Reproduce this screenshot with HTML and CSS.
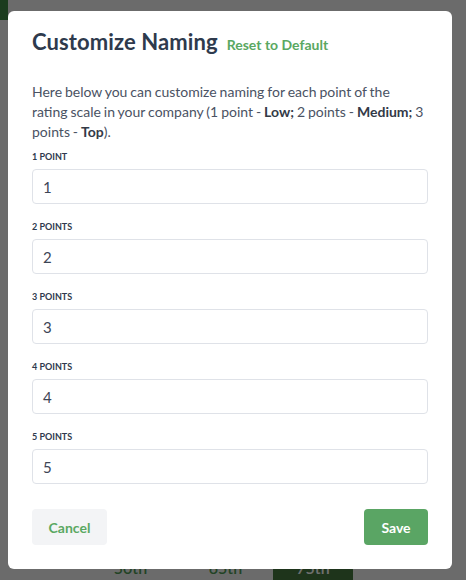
FILE: index.html
```html
<!DOCTYPE html>
<html lang="en">
<head>
<meta charset="utf-8">
<title>Customize Naming</title>
<link rel="stylesheet" href="styles.css">
</head>
<body>
<div class="page">
  <div class="page-top">
    <div class="page-brand"></div>
  </div>
  <div class="page-tabs">
    <span class="tab">50th</span>
    <span class="tab">65th</span>
    <span class="tab tab-active">75th</span>
  </div>
</div>
<div class="overlay"></div>
<div class="modal">
  <div class="modal-header">
    <h2 class="modal-title">Customize Naming</h2>
    <a class="reset-link">Reset to Default</a>
  </div>
  <p class="intro">Here below you can customize naming for each point of the rating scale in your company (1 point - <b>Low;</b> 2 points - <b>Medium;</b> 3 points - <b>Top</b>).</p>
  <div class="fields">
    <div class="field">
      <label class="field-label">1 Point</label>
      <div class="field-input">1</div>
    </div>
    <div class="field">
      <label class="field-label">2 Points</label>
      <div class="field-input">2</div>
    </div>
    <div class="field">
      <label class="field-label">3 Points</label>
      <div class="field-input">3</div>
    </div>
    <div class="field">
      <label class="field-label">4 Points</label>
      <div class="field-input">4</div>
    </div>
    <div class="field">
      <label class="field-label">5 Points</label>
      <div class="field-input">5</div>
    </div>
  </div>
  <div class="modal-actions">
    <button class="btn btn-cancel">Cancel</button>
    <button class="btn btn-save">Save</button>
  </div>
</div>
</body>
</html>
```
FILE: styles.css
```css
* { box-sizing: border-box; }
html, body { margin: 0; padding: 0; }
body {
  width: 466px;
  height: 580px;
  overflow: hidden;
  font-family: "Lato", "Open Sans", sans-serif;
  background: #f4f4f4;
  position: relative;
}
.page {
  height: 580px;
  display: flex;
  flex-direction: column;
}
.page-top { height: 20px; display: flex; }
.page-brand { width: 8px; height: 20px; background: #3e8a44; }
.page-tabs {
  margin-top: auto;
  display: flex;
  padding-left: 83px;
  height: 24px;
}
.tab {
  width: 95px;
  text-align: center;
  font-size: 16px;
  font-weight: 600;
  color: #4f9a55;
  padding-top: 2px;
}
.tab-active {
  width: 80px;
  background: #45763f;
  color: #fff;
  border-radius: 14px 14px 0 0;
}
.overlay {
  position: absolute;
  inset: 0;
  background: rgba(0,0,0,0.56);
}
.modal {
  position: absolute;
  left: 8px;
  top: 11px;
  width: 444px;
  height: 558px;
  background: #fff;
  border-radius: 6px;
  padding: 16px 24px 25px;
  display: flex;
  flex-direction: column;
}
.modal-header {
  display: flex;
  align-items: baseline;
  gap: 9px;
  height: 30px;
}
.modal-title {
  margin: 0;
  font-size: 22px;
  font-weight: 700;
  letter-spacing: 0.1px;
  color: #2e3a4d;
  line-height: 30px;
}
.reset-link {
  font-size: 14px;
  font-weight: 700;
  color: #5aa862;
}
.intro {
  margin: 25px 0 0;
  font-size: 14px;
  line-height: 20px;
  word-spacing: -0.65px;
  color: #4a5263;
}
.intro b { color: #333a47; font-weight: 700; }
.fields {
  margin-top: 9px;
  display: flex;
  flex-direction: column;
  gap: 17px;
}
.field { display: flex; flex-direction: column; gap: 6px; }
.field-label {
  font-size: 9px;
  line-height: 12px;
  font-weight: 700;
  text-transform: uppercase;
  color: #2e3a4d;
}
.field-input {
  height: 35px;
  border: 1px solid #dfe2e8;
  border-radius: 4px;
  padding: 0 10px;
  display: flex;
  align-items: center;
  font-size: 15px;
  color: #3d4556;
}
.modal-actions {
  margin-top: 25px;
  display: flex;
  justify-content: space-between;
}
.btn {
  height: 36px;
  border: none;
  border-radius: 4px;
  font-family: inherit;
  font-size: 14px;
  font-weight: 700;
  padding: 0 16px;
}
.btn-cancel { background: #f3f4f6; color: #5aa862; width: 75px; }
.btn-save { background: #5aa564; color: #fff; width: 64px; }
```
